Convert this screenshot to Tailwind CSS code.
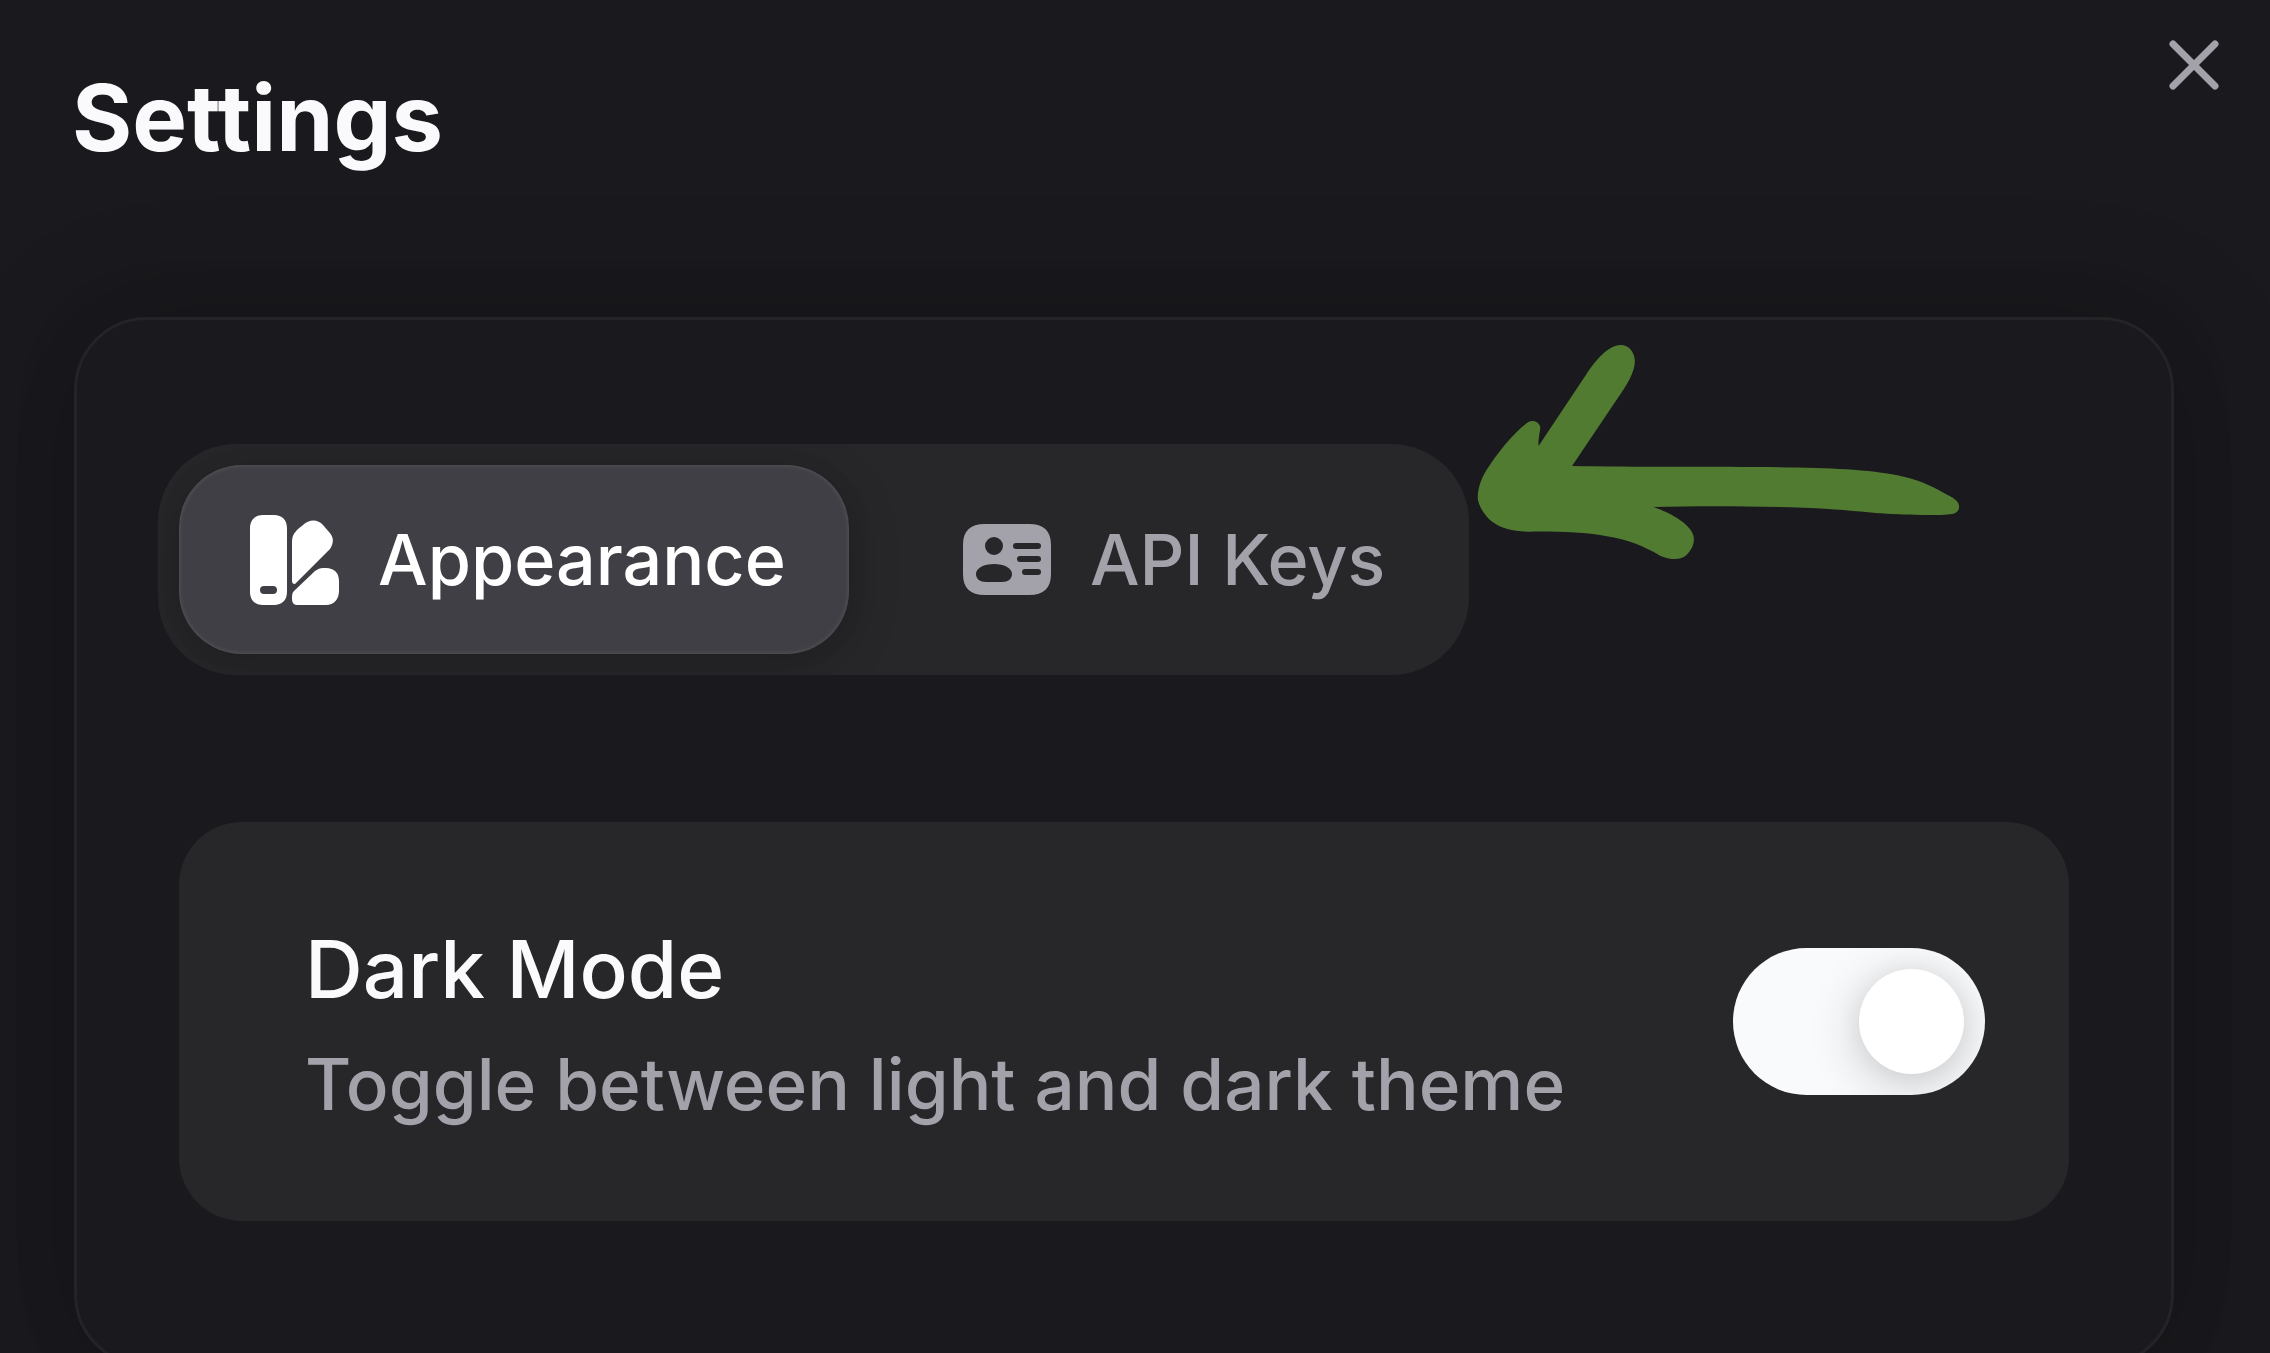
<!DOCTYPE html>
<html lang="en">
<head>
<meta charset="utf-8">
<title>Settings</title>
<script src="https://cdn.jsdelivr.net/npm/@tailwindcss/browser@4"></script>
</head>
<body class="h-screen overflow-hidden bg-[#1a1a1e] font-['Inter',sans-serif] text-[#fafafc]">
<main>
  <header class="flex h-[317px] items-start justify-between pl-[72px] pr-[51px] pt-10">
    <h1 class="pt-[18px] text-[92px] leading-[120px] font-bold">Settings</h1>
    <button type="button" aria-label="Close" class="text-[#a3a2ab]">
      <svg class="size-[50px]" viewBox="0 0 50 50" fill="none" stroke="currentColor" stroke-width="7" stroke-linecap="round"><path d="M4 4l42 42M46 4L4 46"/></svg>
    </button>
  </header>

  <section class="relative mr-24 ml-[74px] rounded-[73px] border-3 border-[#242428] bg-[#1a1a1e] px-[81px] pt-[124px] pb-[143px] shadow-[0_0_79px_rgb(0_0_0/0.06),0_10px_130px_rgb(0_0_0/0.22)]">
    <div role="tablist" class="flex w-fit gap-[42px] overflow-hidden rounded-[78px] bg-[#27272a] p-[21px]">
      <button type="button" role="tab" aria-selected="true" class="flex h-[189px] items-center gap-[31px] rounded-[63px] bg-[#403f45] px-[63px] text-[70px] font-medium text-white shadow-[0_0_26px_rgb(0_0_0/0.05),0_10px_52px_rgb(0_0_0/0.2),inset_0_0_5px_rgb(255_255_255/0.15)]">
        <svg class="size-[105px] shrink-0" viewBox="-8 -8 105 105" fill="currentColor">
          <path fill-rule="evenodd" d="M13 0h11c8 0 13 5 13 13v64c0 8-5 13-13 13H13C5 90 0 85 0 77V13C0 5 5 0 13 0zM14 71a4 4 0 0 0 0 8h9a4 4 0 0 0 0-8z"/>
          <path d="M42 66V27c0-6 2-9 6-13l5-4c6-6 15-6 20 0l6 7c5 5 5 11 1 17L46 68c-1 2-4 1-4-2z"/>
          <path d="M44 76L65 56c3-2 5-3 8-3h3c8 0 13 5 13 13v10c0 8-5 14-13 14H47c-4 0-5-3-5-7 0-3 0-5 2-7z"/>
        </svg>
        Appearance
      </button>
      <button type="button" role="tab" aria-selected="false" class="flex h-[189px] items-center gap-[31px] rounded-[63px] px-[63px] text-[70px] font-medium text-[#a3a2ab]">
        <svg class="size-[105px] shrink-0" viewBox="-9 -17 105 105" fill="currentColor">
          <path fill-rule="evenodd" d="M22 0h44c15 0 22 7 22 21v29c0 14-7 21-22 21H22C7 71 0 64 0 50V21C0 7 7 0 22 0zM31 13a9 9 0 1 0 0 18 9 9 0 0 0 0-18zM31 40c-10 0-18 4-18 10 0 5 4 8 10 8h16c6 0 10-3 10-8 0-6-8-10-18-10zM53 19a3 3 0 0 0 0 6h22a3 3 0 0 0 0-6zM57 32a3 3 0 0 0 0 6h18a3 3 0 0 0 0-6zM62 45a3 3 0 0 0 0 6h13a3 3 0 0 0 0-6z"/>
        </svg>
        API Keys
      </button>
    </div>

    <div class="mx-[21px] mt-[147px] flex h-[399px] items-center justify-between rounded-[63px] bg-[#27272a] pr-[84px] pl-[126px]">
      <label for="dark-mode">
        <span class="block text-[80px] leading-[126px] font-medium">Dark Mode</span>
        <span class="block text-[71px] leading-[105px] font-medium text-[#a3a2ab]">Toggle between light and dark theme</span>
      </label>
      <span class="relative flex h-[147px] w-[252px] items-center justify-end overflow-hidden rounded-full bg-[#f9fafc] pr-[21px]">
        <input id="dark-mode" type="checkbox" role="switch" checked class="absolute inset-0 appearance-none">
        <span class="size-[105px] rounded-full bg-white shadow-[0_0_26px_rgb(0_0_0/0.05),0_10px_52px_rgb(0_0_0/0.2)]"></span>
      </span>
    </div>

    <svg class="pointer-events-none absolute top-0 left-[1373px] h-[260px] w-[530px]" viewBox="0 0 1568 780" preserveAspectRatio="none" fill="#527b32" aria-hidden="true">
      <path d="M361 438L495 236C526 190 547 155 547 122C545 95 529 75 505 75C470 75 430 120 402 165L262 378C260 352 270 325 266 318C260 302 242 300 232 306C190 335 140 400 108 450C90 480 82 508 82 533C83 560 110 595 126 606C155 627 190 634 235 635C320 634 400 637 460 648C530 660 570 677 622 707C655 722 684 720 700 705C716 688 723 673 721 652C719 622 670 585 602 561C750 557 960 558 1120 567C1220 573 1260 583 1400 585C1440 586 1475 584 1490 581C1505 577 1510 562 1503 548C1495 534 1470 525 1440 507C1370 470 1300 457 1170 448C1000 436 600 443 361 438z"/>
    </svg>
  </section>
</main>
</body>
</html>
